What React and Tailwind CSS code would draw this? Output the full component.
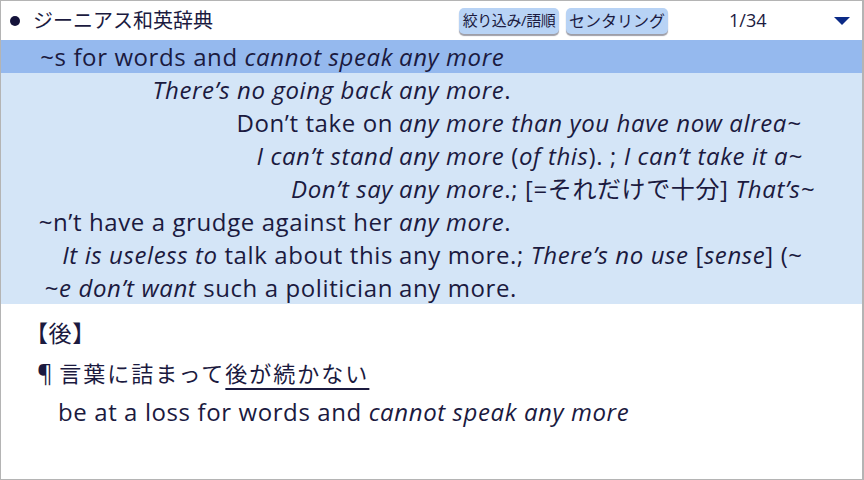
const INK = "text-[#1b1a3f]";

const rows = [
  {
    left: (
      <>
        ~s for words and <i>cannot speak</i>
      </>
    ),
    right: <i>any more</i>,
    active: true,
  },
  {
    left: <i>There’s no going back</i>,
    right: (
      <>
        <i>any more</i>.
      </>
    ),
  },
  {
    left: <>Don’t take on</>,
    right: <i>any more than you have now alrea~</i>,
  },
  {
    left: <i>I can’t stand</i>,
    right: (
      <>
        <i>any more</i> (<i>of this</i>). ; <i>I can’t take it a~</i>
      </>
    ),
  },
  {
    left: <i>Don’t say</i>,
    right: (
      <>
        <i>any more</i>.; [=それだけで十分] <i>That’s~</i>
      </>
    ),
  },
  {
    left: <>~n’t have a grudge against her</>,
    right: (
      <>
        <i>any more</i>.
      </>
    ),
  },
  {
    left: (
      <>
        <i>It is useless to</i> talk about this
      </>
    ),
    right: (
      <>
        any more.; <i>There’s no use</i> [<i>sense</i>] (~
      </>
    ),
  },
  {
    left: (
      <>
        ~<i>e don’t want</i> such a politician
      </>
    ),
    right: <>any more.</>,
  },
];

function Row({ left, right, active }) {
  return (
    <div
      className={`flex h-[33px] text-[24px] leading-[33px] tracking-[0.6px] ${
        active ? "bg-[#95b9ee]" : "bg-[#d4e5f7]"
      }`}
    >
      <div className="flex w-[398px] shrink-0 justify-end overflow-hidden whitespace-nowrap pr-[6px]">
        <span>{left}</span>
      </div>
      <div className="overflow-hidden whitespace-nowrap">{right}</div>
    </div>
  );
}

export default function App() {
  return (
    <div
      className={`h-[480px] w-[864px] overflow-hidden border border-r-2 border-[#b4b4b4] bg-white ${INK}`}
      style={{ fontFamily: '"Open Sans", "Noto Sans CJK JP", sans-serif' }}
    >
      {/* header */}
      <div className="flex h-[39px] items-center">
        <div className="flex w-[458px] shrink-0 items-center">
          <span className="ml-[9px] h-[10px] w-[10px] rounded-full bg-[#14123a]" />
          <span className="ml-[13px] text-[20px]">ジーニアス和英辞典</span>
        </div>
        <div className="flex gap-[7px]">
          <button className="flex h-[26px] w-[100px] items-center justify-center whitespace-nowrap rounded-[5px] bg-[#b8d3f5] text-[15px] tracking-[-0.4px] shadow-[0_2px_1px_rgba(40,40,60,0.45)]">
            絞り込み/語順
          </button>
          <button className="flex h-[26px] w-[102px] items-center justify-center whitespace-nowrap rounded-[5px] bg-[#b8d3f5] text-[16px] shadow-[0_2px_1px_rgba(40,40,60,0.45)]">
            センタリング
          </button>
        </div>
        <span className="ml-[61px] text-[18px]">1/34</span>
        <svg className="ml-auto mr-[12px]" width="16" height="8" viewBox="0 0 16 8">
          <polygon points="0,0 16,0 8,8" fill="#0b2a86" />
        </svg>
      </div>

      {/* concordance */}
      <div>
        {rows.map((r, i) => (
          <Row key={i} {...r} />
        ))}
      </div>

      {/* entry */}
      <div className="pt-[14px] text-[24px] tracking-[0.6px]">
        <div className="flex h-[30px] items-center pl-[24px] text-[23px]">【後】</div>
        <div className="mt-[10px] flex h-[30px] items-center pl-[36px]">
          <span className="mr-[6px]">¶</span>
          <span className="text-[22px] tracking-[2px]">
            言葉に詰まって
            <span className="underline decoration-2 underline-offset-[6px]">後が続かない</span>
          </span>
        </div>
        <div className="mt-[9px] flex h-[30px] items-center pl-[57px]">
          <span>
            be at a loss for words and <i>cannot speak any more</i>
          </span>
        </div>
      </div>
    </div>
  );
}
